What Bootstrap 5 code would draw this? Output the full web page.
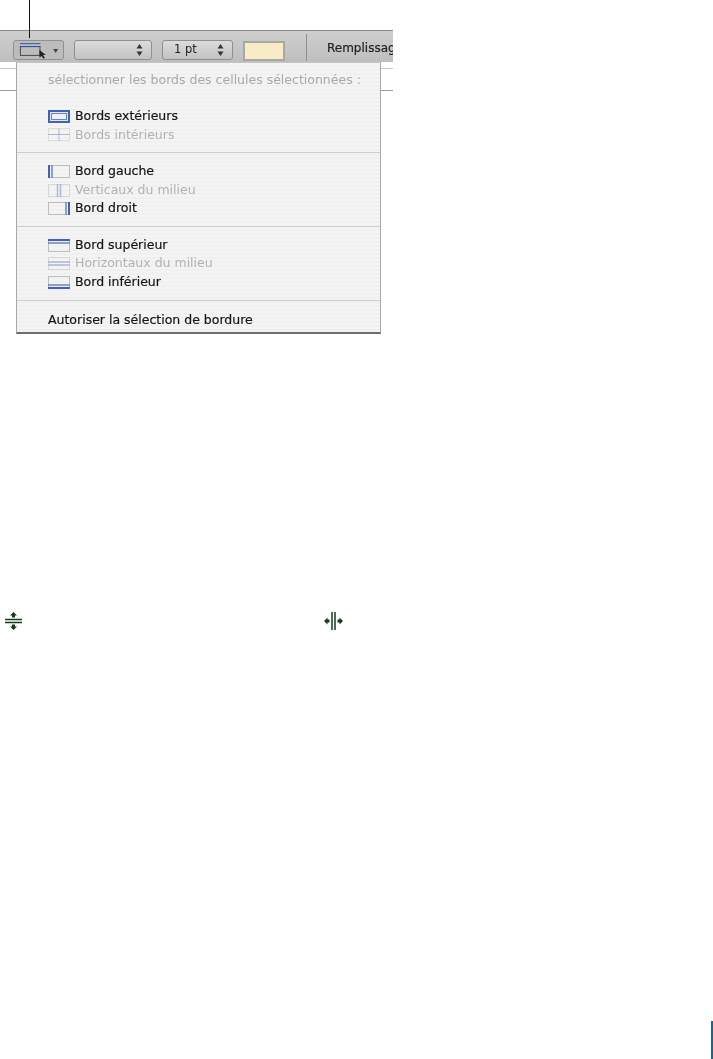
<!DOCTYPE html>
<html lang="fr">
<head>
  <meta charset="UTF-8">
  <title>Bordures</title>
  <link href="https://cdn.jsdelivr.net/npm/bootstrap@5.3.0/dist/css/bootstrap.min.css" rel="stylesheet">
  <style>
    body { background: #fff; font-family: "DejaVu Sans", sans-serif; overflow: hidden; }
    .page { height: 1059px; }
    .leader { position: absolute; left: 29px; top: 0; width: 1px; height: 38px; background: #111; z-index: 5; }
    .shot { width: 393px; height: 305px; margin-top: 30px; overflow: hidden; filter: blur(.5px); }
    .tools { height: 32px; padding: 9px 0 0 13px; gap: 10px; border-top: 1px solid #8c8c8c;
      background: linear-gradient(#cecece, #bebebe); font-size: 11.5px; color: #222; }
    .tools > * { flex: none; }
    .tool { height: 20px; border: 1px solid #8f8f8f; border-radius: 3px; background: linear-gradient(#dcdcdc, #c2c2c2); }
    .tool-borders { width: 51px; background: #bcbcbc; }
    .tool-style { width: 78px; }
    .tool-size { width: 71px; padding-left: 11px; }
    .swatch { width: 42px; height: 20px; margin-top: 1px; border: 2px solid #a9a9a0; background: #f8ebc8; }
    .tool-sep { width: 1px; height: 27px; margin: -6px 10px 0 11px; background: #8e8e8e; }
    .tool-label { white-space: nowrap; font-size: 12px; margin-top: -1px; -webkit-text-stroke: .2px #222; }
    .rule-a { height: 1px; margin-top: 6px; background: #c9c9c9; }
    .rule-b { height: 1px; margin-top: 21px; background: #9a9a9a; }
    .menu-pop.dropdown-menu { left: 16px; top: 32px; width: 365px; height: 272px; padding: 8px 0 0; min-width: 0;
      border: 1px solid #a8a8a8; border-top-color: #c4c4c4; border-bottom: 2px solid #6e6e6e; border-radius: 0;
      background: repeating-linear-gradient(#f4f4f4 0 2px, #f0f0f0 2px 4px); font-size: 12.5px; }
    .menu-pop .dropdown-header { padding: 0 0 0 31px; height: 18px; line-height: 18px; margin-bottom: 18px; color: #a9a9a9; font-size: 12.5px; white-space: nowrap; }
    .menu-pop .dropdown-item { padding: 0 0 0 31px; height: 18.6px; gap: 5px; color: #151515; background: none; -webkit-text-stroke: .2px #151515; }
    .menu-pop .dropdown-item.disabled { color: #b2b2b2; -webkit-text-stroke: 0; }
    .menu-pop .dropdown-divider { margin: 8px 0 9px; border-color: #cfcfcf; opacity: 1; }
    .menu-pop .dropdown-divider.last-rule { margin-bottom: 10px; }
    .menu-pop svg { flex: none; }
    .cursors { margin-top: 277px; height: 18px; padding-left: 5px; }
    .cursor-gap { width: 302px; }
    .page-bar { width: 2px; height: 38px; margin-top: 391px; background: #0a6aa6; }
  </style>
</head>
<body>
  <div class="page position-relative d-flex flex-column">
    <div class="leader"></div>

    <div class="shot position-relative flex-shrink-0">
      <div class="tools d-flex">
        <div class="tool tool-borders d-flex align-items-center">
          <svg width="50" height="18" viewBox="0 0 50 18">
            <rect x="6.5" y="5.5" width="20" height="9" fill="none" stroke="#45454f"/>
            <path d="M6 2.5h21M6 5.5h21" stroke="#2f56b0" fill="none"/>
            <path d="M26 9l0 8 2-2 2 3 1.500-1-2-3h3z" fill="#222"/>
            <path d="M40 8h5l-2.500 4z" fill="#444"/>
          </svg>
        </div>
        <div class="tool tool-style d-flex justify-content-end align-items-center pe-2">
          <svg width="7" height="12" viewBox="0 0 7 12"><path d="M3.500 0l3 4.500h-6zM3.500 12l3-4.500h-6z" fill="#333"/></svg>
        </div>
        <div class="tool tool-size d-flex justify-content-between align-items-center pe-2">
          <span>1 pt</span>
          <svg width="7" height="12" viewBox="0 0 7 12"><path d="M3.500 0l3 4.500h-6zM3.500 12l3-4.500h-6z" fill="#333"/></svg>
        </div>
        <div class="swatch"></div>
        <div class="tool-sep"></div>
        <div class="tool-label">Remplissage</div>
      </div>
      <div class="rule-a"></div>
      <div class="rule-b"></div>

      <div class="dropdown-menu show menu-pop">
        <div class="dropdown-header">sélectionner les bords des cellules sélectionnées :</div>

        <div class="dropdown-item d-flex align-items-center">
          <svg width="22" height="13" viewBox="0 0 22 13"><rect x="1" y="1" width="20" height="11" fill="#dfe6f3" stroke="#3f62b5" stroke-width="2"/><rect x="3.500" y="3.500" width="15" height="6" fill="#eef0f5" stroke="#6f83b8"/></svg>
          <span>Bords extérieurs</span>
        </div>
        <div class="dropdown-item disabled d-flex align-items-center">
          <svg width="22" height="13" viewBox="0 0 22 13"><rect x=".5" y=".5" width="21" height="12" fill="none" stroke="#dcdcdc"/><path d="M0 6.500h22M11 0v13" stroke="#a9b7d8"/></svg>
          <span>Bords intérieurs</span>
        </div>
        <hr class="dropdown-divider">

        <div class="dropdown-item d-flex align-items-center">
          <svg width="22" height="13" viewBox="0 0 22 13"><rect x=".5" y=".5" width="21" height="12" fill="none" stroke="#bdbdbd"/><path d="M1 0v13" stroke="#3f62b5" stroke-width="2"/><path d="M4 0v13" stroke="#6f83b8" stroke-width="1.500"/></svg>
          <span>Bord gauche</span>
        </div>
        <div class="dropdown-item disabled d-flex align-items-center">
          <svg width="22" height="13" viewBox="0 0 22 13"><rect x=".5" y=".5" width="21" height="12" fill="none" stroke="#d6d6d6"/><path d="M9.500 0v13M12.500 0v13" stroke="#a9b7d8" stroke-width="1.500"/></svg>
          <span>Verticaux du milieu</span>
        </div>
        <div class="dropdown-item d-flex align-items-center">
          <svg width="22" height="13" viewBox="0 0 22 13"><rect x=".5" y=".5" width="21" height="12" fill="none" stroke="#bdbdbd"/><path d="M18 0v13" stroke="#6f83b8" stroke-width="1.500"/><path d="M21 0v13" stroke="#3f62b5" stroke-width="2"/></svg>
          <span>Bord droit</span>
        </div>
        <hr class="dropdown-divider">

        <div class="dropdown-item d-flex align-items-center">
          <svg width="22" height="13" viewBox="0 0 22 13"><rect x=".5" y=".5" width="21" height="12" fill="none" stroke="#bdbdbd"/><path d="M0 1h22" stroke="#3f62b5" stroke-width="2"/><path d="M0 4h22" stroke="#6f83b8" stroke-width="1.500"/></svg>
          <span>Bord supérieur</span>
        </div>
        <div class="dropdown-item disabled d-flex align-items-center">
          <svg width="22" height="13" viewBox="0 0 22 13"><rect x=".5" y=".5" width="21" height="12" fill="none" stroke="#d6d6d6"/><path d="M0 5h22M0 8h22" stroke="#a9b7d8" stroke-width="1.500"/></svg>
          <span>Horizontaux du milieu</span>
        </div>
        <div class="dropdown-item d-flex align-items-center">
          <svg width="22" height="13" viewBox="0 0 22 13"><rect x=".5" y=".5" width="21" height="12" fill="none" stroke="#bdbdbd"/><path d="M0 9h22" stroke="#6f83b8" stroke-width="1.500"/><path d="M0 12h22" stroke="#3f62b5" stroke-width="2"/></svg>
          <span>Bord inférieur</span>
        </div>
        <hr class="dropdown-divider last-rule">

        <div class="dropdown-item d-flex align-items-center">Autoriser la sélection de bordure</div>
      </div>
    </div>

    <div class="cursors d-flex flex-shrink-0">
      <svg width="17" height="18" viewBox="0 0 17 18"><path d="M8.500 0l3.500 3.500h-2v2h-3v-2h-2zM8.500 18l3.500-3.500h-2v-2h-3v2h-2z" fill="#143d1c"/><path d="M0 7.500h17M0 10.500h17" stroke="#143d1c" stroke-width="1.500"/></svg>
      <div class="cursor-gap"></div>
      <svg width="19" height="18" viewBox="0 0 19 18"><path d="M0 9l3.500-3.500v2h2v3h-2v2zM19 9l-3.500-3.500v2h-2v3h2v2z" fill="#143d1c"/><path d="M8 0v18M11 0v18" stroke="#143d1c" stroke-width="1.500"/></svg>
    </div>

    <div class="page-bar ms-auto flex-shrink-0"></div>
  </div>
  <script src="https://cdn.jsdelivr.net/npm/bootstrap@5.3.0/dist/js/bootstrap.bundle.min.js"></script>
</body>
</html>
